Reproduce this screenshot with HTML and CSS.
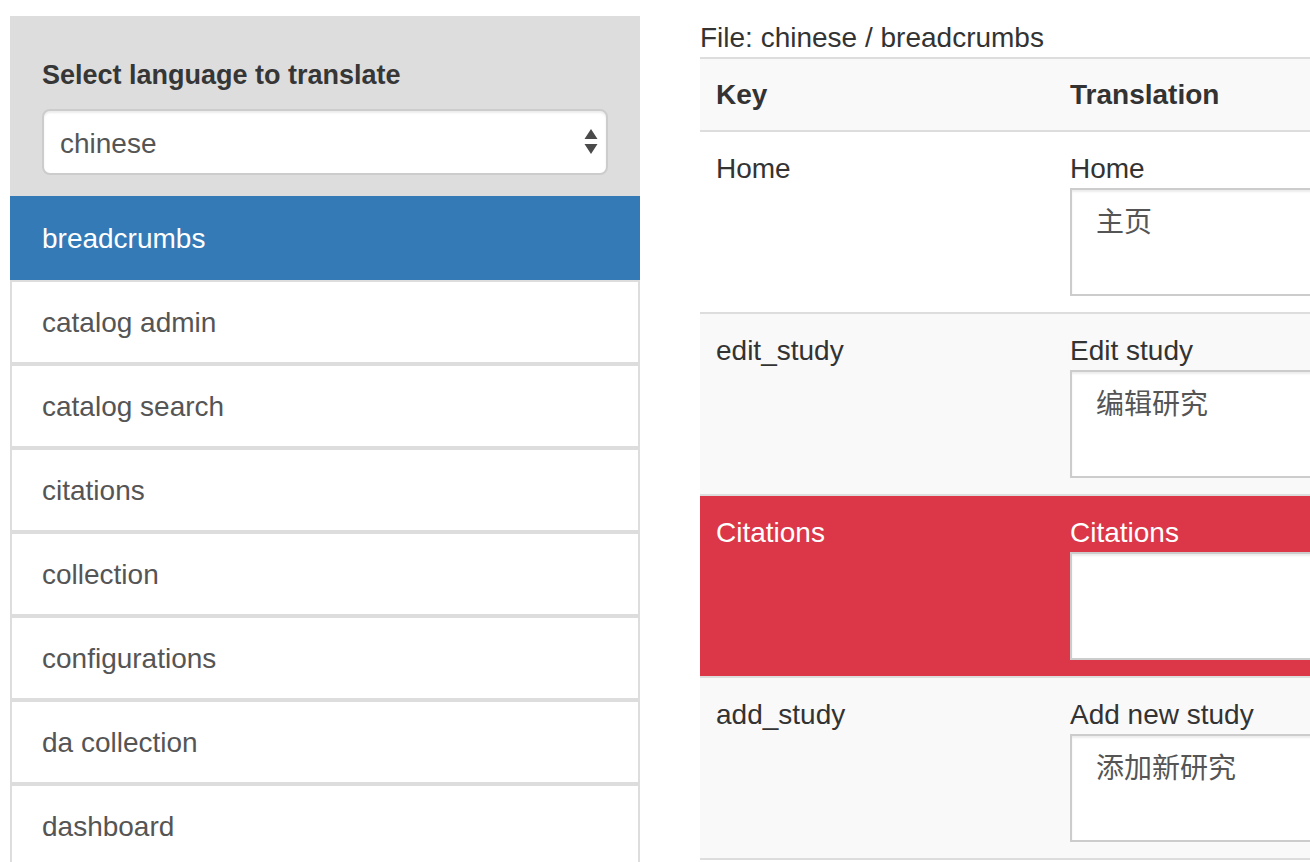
FILE: index.html
```html
<!DOCTYPE html>
<html lang="en">
<head>
<meta charset="utf-8">
<title>Translate</title>
<link rel="stylesheet" href="styles.css">
</head>
<body>
<div class="page">
  <aside class="sidebar">
    <div class="lang-panel">
      <label class="lang-label" for="lang">Select language to translate</label>
      <div class="select-wrap">
        <select id="lang" class="lang-select"><option>chinese</option></select>
        <svg class="select-arrows" width="14" height="26" viewBox="0 0 14 26"><path d="M7 0 L13.5 10 L0.5 10 Z M0.5 15 L13.5 15 L7 25 Z" fill="#4a4a4a"/></svg>
      </div>
    </div>
    <nav class="list-group">
      <a class="list-item active" href="#">breadcrumbs</a>
      <a class="list-item" href="#">catalog admin</a>
      <a class="list-item" href="#">catalog search</a>
      <a class="list-item" href="#">citations</a>
      <a class="list-item" href="#">collection</a>
      <a class="list-item" href="#">configurations</a>
      <a class="list-item" href="#">da collection</a>
      <a class="list-item" href="#">dashboard</a>
    </nav>
  </aside>
  <main class="main">
    <div class="file-title">File: chinese / breadcrumbs</div>
    <table class="trans-table">
      <thead>
        <tr><th class="col-key">Key</th><th>Translation</th></tr>
      </thead>
      <tbody>
        <tr>
          <td>Home</td>
          <td><div class="src">Home</div><textarea class="trans-input">主页</textarea></td>
        </tr>
        <tr class="striped">
          <td>edit_study</td>
          <td><div class="src">Edit study</div><textarea class="trans-input">编辑研究</textarea></td>
        </tr>
        <tr class="missing">
          <td>Citations</td>
          <td><div class="src">Citations</div><textarea class="trans-input"></textarea></td>
        </tr>
        <tr class="striped">
          <td>add_study</td>
          <td><div class="src">Add new study</div><textarea class="trans-input">添加新研究</textarea></td>
        </tr>
      </tbody>
    </table>
  </main>
</div>
</body>
</html>
```

FILE: styles.css
```css
html, body {
  margin: 0;
  padding: 0;
  background: #fff;
}
body {
  font-family: "Liberation Sans", Arial, "Noto Sans CJK SC", sans-serif;
  font-size: 28px;
  line-height: 40px;
  color: #333;
  overflow: hidden;
}
.page {
  display: flex;
  align-items: flex-start;
  padding: 16px 0 0 10px;
}
.sidebar {
  flex: none;
  width: 630px;
}
.lang-panel {
  background: #ddd;
  padding: 39px 32px 21px 32px;
}
.lang-label {
  display: block;
  font-weight: 700;
  font-size: 27px;
  color: #363636;
  margin-bottom: 14px;
}
.select-wrap {
  position: relative;
}
.lang-select {
  display: block;
  width: 100%;
  height: 66px;
  box-sizing: border-box;
  -webkit-appearance: none;
  appearance: none;
  background: #fff;
  border: 2px solid #ccc;
  border-radius: 8px;
  box-shadow: inset 0 2px 2px rgba(0, 0, 0, 0.075);
  padding: 2px 40px 0 16px;
  font-family: "Liberation Sans", Arial, sans-serif;
  font-size: 28px;
  color: #555;
  outline: none;
}
.select-arrows {
  position: absolute;
  right: 10px;
  top: 20px;
}
.list-group {
  display: flex;
  flex-direction: column;
}
.list-item {
  display: block;
  padding: 21px 30px 19px;
  border: 2px solid #ddd;
  background: #fff;
  color: #555;
  text-decoration: none;
}
.list-item.active {
  background: #337ab7;
  border-color: #337ab7;
  color: #fff;
}
.main {
  flex: none;
  width: 900px;
  margin-left: 60px;
  padding-top: 1px;
}
.file-title {
  color: #333;
  position: relative;
  top: 1px;
}
.trans-table {
  width: 100%;
  border-collapse: collapse;
}
.trans-table th,
.trans-table td {
  text-align: left;
  vertical-align: top;
  padding: 17px 16px 16px;
  border-top: 2px solid #ddd;
}
.trans-table thead th {
  background: #f9f9f9;
  font-weight: 700;
  padding-top: 16px;
  padding-bottom: 15px;
  border-bottom: 2px solid #ddd;
}
.col-key {
  width: 322px;
}
.trans-table tbody tr:last-child td {
  border-bottom: 2px solid #ddd;
}
.trans-table tr.striped td {
  background: #f9f9f9;
}
.trans-table tr.missing td {
  background: #db3748;
  color: #fff;
}
.src {
  margin-bottom: -1px;
}
.trans-input {
  display: block;
  width: 100%;
  height: 108px;
  box-sizing: border-box;
  margin: 0;
  border: 2px solid #ccc;
  border-radius: 0;
  box-shadow: inset 0 2px 2px rgba(0, 0, 0, 0.075);
  padding: 13px 24px 11px;
  background: #fff;
  font-family: "Liberation Sans", Arial, "Noto Sans CJK SC", sans-serif;
  font-size: 28px;
  line-height: 40px;
  color: #555;
  resize: none;
  overflow: hidden;
}
```
